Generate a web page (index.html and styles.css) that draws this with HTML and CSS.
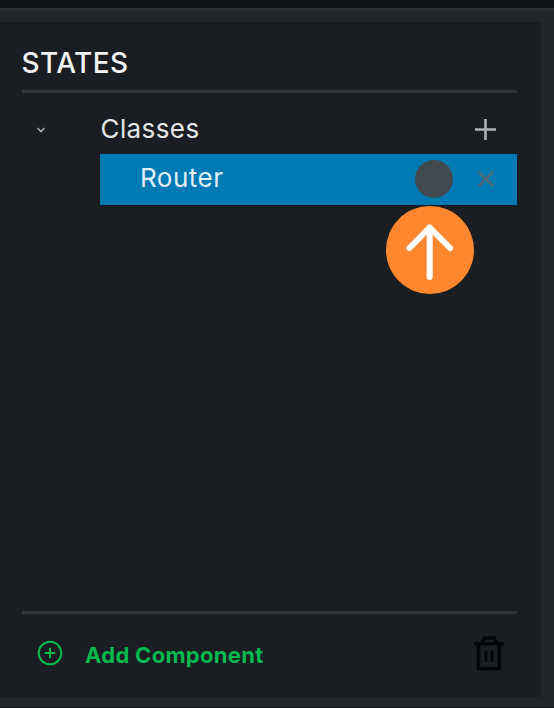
FILE: index.html
```
<!DOCTYPE html>
<html lang="en">
<head>
<meta charset="utf-8">
<title>States</title>
<link rel="stylesheet" href="styles.css">
</head>
<body>
<div class="frame">
  <main class="panel">
    <h1 class="title">STATES</h1>
    <section class="tree">
      <div class="group">
        <svg class="chevron" viewBox="0 0 10 8"><path d="M1.600 2 5 5.600 8.400 2"/></svg>
        <span class="group-name">Classes</span>
        <svg class="plus" viewBox="0 0 21 21"><path d="M10.500 0v21M0 10.500h21"/></svg>
      </div>
      <div class="item">
        <span class="item-name">Router</span>
        <span class="dot"></span>
        <svg class="close" viewBox="0 0 16 16"><path d="M.8.8l14.4 14.4M15.200.8.8 15.200"/></svg>
        <svg class="pointer" viewBox="0 0 88 88"><circle cx="44" cy="44" r="44"/><path d="M43.700 71V21.500M23.500 42 43.700 21.500 64 42"/></svg>
      </div>
    </section>
    <footer class="footer">
      <svg class="add-icon" viewBox="0 0 26 26"><circle cx="13" cy="13" r="11.300"/><path d="M13 7.800v10.400M7.800 13h10.400"/></svg>
      <span class="add-label">Add Component</span>
      <svg class="trash" viewBox="0 0 30 34"><path d="M0 7.800h30M4.500 8v24.500h21V8M7.500 7.500 10.500 2h9.500l3 5.500"/><path class="trash-bars" d="M12 14.500v11.500M18 14.500v11.500"/></svg>
    </footer>
  </main>
</div>
</body>
</html>
```

FILE: styles.css
```
* { box-sizing: border-box; }
body {
  margin: 0;
  height: 708px;
  padding: 8px 0 1px;
  background: #0f1317;
  font-family: Inter, sans-serif;
  overflow: hidden;
}
svg { display: block; fill: none; flex: none; overflow: visible; }
.frame {
  height: 699px;
  padding: 11px 13px 10px 0;
  background: #222629;
  border-top: 3px solid #2a2d31;
}
.panel {
  height: 675px;
  padding: 0 24px 0 21.500px;
  background: #1a1d21;
  display: flex;
  flex-direction: column;
}
.title {
  margin: 0;
  height: 71px;
  padding-top: 24px;
  border-bottom: 3px solid #323539;
  color: #f2f2f2;
  font-size: 28px;
  line-height: 34px;
  font-weight: 500;
  letter-spacing: .4px;
}
.tree { flex: 1; }
.group {
  height: 61px;
  display: flex;
  align-items: center;
  padding: 11px 21px 0 14.500px;
}
.chevron { width: 10px; height: 8px; margin-top: 2px; stroke: #a5a8aa; stroke-width: 1.7; }
.group-name {
  margin-left: 54.500px;
  padding-bottom: 1px;
  flex: 1;
  color: #e5e6e7;
  font-size: 26px;
  line-height: 32px;
  letter-spacing: .4px;
}
.plus { width: 21px; height: 21px; stroke: #b0b2b4; stroke-width: 2.6; }
.item {
  position: relative;
  height: 51px;
  margin-left: 78.500px;
  padding: 0 23px 1px 40px;
  display: flex;
  align-items: center;
  background: #007ab5;
}
.item-name { flex: 1; color: #e3edf3; font-size: 26px; line-height: 32px; padding-bottom: 2px; letter-spacing: .5px; }
.dot { width: 38px; height: 38px; border-radius: 50%; background: #414b4f; }
.close { width: 16px; height: 16px; margin-left: 25px; stroke: #536a75; stroke-width: 2.4; }
.pointer { position: absolute; left: 286px; top: 52px; width: 88px; height: 88px; }
.pointer circle { fill: #ff882f; }
.pointer path { stroke: #fff; stroke-width: 6; stroke-linecap: round; stroke-linejoin: round; }
.footer {
  height: 86px;
  border-top: 3px solid #323539;
  display: flex;
  align-items: center;
  padding: 0 13px 5px 15px;
}
.add-icon { width: 26px; height: 26px; stroke: #04b94e; stroke-width: 2; }
.add-label {
  margin-left: 22.500px;
  padding-top: 4px;
  flex: 1;
  color: #04b94e;
  font-size: 22px;
  line-height: 28px;
  font-weight: 700;
  letter-spacing: .3px;
}
.trash { width: 30px; height: 34px; stroke: #050607; stroke-width: 3.4; }
.trash-bars { stroke-width: 2.800; }
```
